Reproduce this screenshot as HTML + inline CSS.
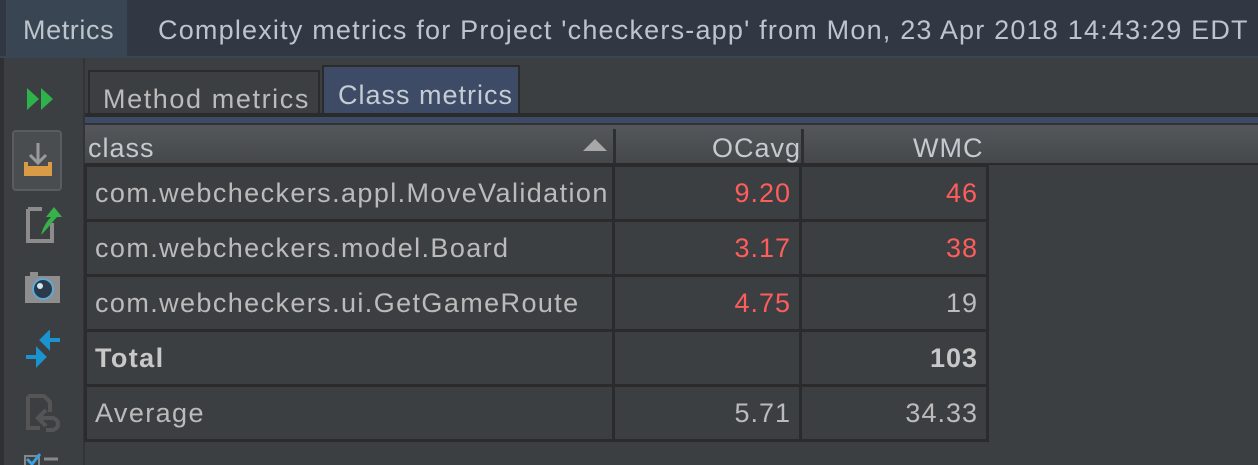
<!DOCTYPE html>
<html><head><meta charset="utf-8"><style>
*{margin:0;padding:0;box-sizing:border-box}
body{width:1258px;height:465px;overflow:hidden;background:#3c3f41;font-family:"Liberation Sans","DejaVu Sans",sans-serif;color:#bbbbbb;position:relative}
.top{position:absolute;left:0;top:0;width:1258px;height:58px;background:#313843;border-bottom:2px solid #3a4452}
.top .m{position:absolute;left:6px;top:0;width:121px;height:57px;background:#3a4554;color:#bcc4cd;font-size:27px;line-height:60px;padding-left:17px;letter-spacing:0.6px}
.top .t{position:absolute;left:158px;top:0;line-height:60px;font-size:27px;letter-spacing:1.2px;color:#bcc4cd;white-space:nowrap}
.lb{position:absolute;left:0;top:58px;width:4px;height:407px;background:#2e3033}
.side{position:absolute;left:83px;top:58px;width:2px;height:407px;background:#323436}
.tab{position:absolute;font-size:27px;white-space:nowrap;letter-spacing:1.6px}
.t1{left:88px;top:70px;width:232px;height:46px;background:#3c3f41;border:2px solid #2b2b2b;border-bottom:none;padding-left:13px;line-height:54px;color:#bbb}
.t2{left:322px;top:65px;width:198px;height:52px;background:#3d4b66;border:2px solid #2b2b2b;border-bottom:none;padding-left:14px;line-height:56px;color:#c6ccd4;letter-spacing:1px}
.line{position:absolute;left:85px;top:113px;width:1173px;height:4px;background:#2b2b2b}
.blue{position:absolute;left:85px;top:117px;width:1173px;height:6px;background:#3d4b66}
.hdr{position:absolute;left:85px;top:123px;width:1173px;height:42px;background:linear-gradient(#54575b,#45484b);border-top:2px solid #333;border-bottom:2px solid #2b2b2b}
.hdr span{position:absolute;top:0;font-size:27px;line-height:46px;color:#c4cad0;letter-spacing:1px}
.sep{position:absolute;top:4px;width:3px;height:34px;background:#2d2f31}
table{position:absolute;left:84px;top:164px;border-collapse:collapse;table-layout:fixed;width:902px}
td{height:55px;border:3px solid #2b2b2b;font-size:27px;padding:0 8px;color:#bbbbbb;white-space:nowrap;letter-spacing:1.4px;overflow:visible}
td.n{text-align:right;letter-spacing:1px}
.r{color:#ff5c5c}
b{color:#c8c8c8}
</style></head><body>
<div class="top"><div class="m">Metrics</div><div class="t">Complexity metrics for Project 'checkers-app' from Mon, 23 Apr 2018 14:43:29 EDT</div></div>
<div class="lb"></div>
<div class="side"></div>
<svg style="position:absolute;left:25px;top:86px" width="36" height="26"><polygon points="2,2 14,13 2,24" fill="#2db34a"/><polygon points="16,2 28,13 16,24" fill="#2db34a"/></svg>
<div style="position:absolute;left:12px;top:130px;width:50px;height:61px;background:#4a4d50;border:2px solid #5a5d60;border-radius:4px"></div>
<svg style="position:absolute;left:22px;top:140px" width="32" height="42"><path d="M16 3v20M8 15l8 8 8-8" stroke="#9a9a9a" stroke-width="3" fill="none"/><rect x="2" y="26" width="28" height="10" fill="#d99b45"/><rect x="2" y="22" width="4" height="6" fill="#d99b45"/><rect x="26" y="22" width="4" height="6" fill="#d99b45"/></svg>
<svg style="position:absolute;left:24px;top:203px" width="40" height="40"><path d="M4 6h14M4 6v32h24v-18" stroke="#8c8c8c" stroke-width="4" fill="none"/><path d="M17 32c2-8 6-14 10-18h-5l8-10 8 10h-5c-4 4-8 10-16 18z" fill="#37b24a"/></svg>
<svg style="position:absolute;left:24px;top:270px" width="38" height="34"><rect x="1" y="6" width="35" height="27" fill="#8e8e8e"/><rect x="6" y="2" width="8" height="5" fill="#8e8e8e"/><circle cx="19" cy="19" r="10" fill="#2a3a48" stroke="#5fa8d8" stroke-width="2"/><circle cx="16" cy="16" r="3" fill="#cfe6f5"/></svg>
<svg style="position:absolute;left:24px;top:330px" width="40" height="40"><path d="M36 10H24M24 4v12l-6-6z" fill="#1a93cf" stroke="#1a93cf" stroke-width="4"/><path d="M2 27h12M14 21v12l6-6z" fill="#1a93cf" stroke="#1a93cf" stroke-width="4"/></svg>
<svg style="position:absolute;left:24px;top:392px" width="40" height="40"><path d="M4 4h16l6 6v10M4 4v32h12" stroke="#555" stroke-width="4" fill="none"/><path d="M22 18l-8 8 8 8M14 26h14a6 6 0 0 1 0 12h-6" stroke="#555" stroke-width="4" fill="none"/></svg>
<svg style="position:absolute;left:24px;top:453px" width="40" height="12"><rect x="1" y="3" width="14" height="12" fill="none" stroke="#888" stroke-width="2"/><path d="M3 6l5 5 8-10" stroke="#3aa0e0" stroke-width="3" fill="none"/><path d="M20 6h14" stroke="#888" stroke-width="3"/></svg>

<div class="tab t1">Method metrics</div>
<div class="tab t2">Class metrics</div>
<div class="line"></div>
<div class="blue"></div>
<div class="hdr">
<span style="left:3px">class</span>
<svg style="position:absolute;left:498px;top:13px" width="24" height="14"><polygon points="0,13 12,1 24,13" fill="#a8a8a8"/></svg>
<div class="sep" style="left:528px"></div>
<span style="left:627px">OCavg</span>
<div class="sep" style="left:716px"></div>
<span style="left:828px">WMC</span>
</div>
<table>
<colgroup><col style="width:528px"><col style="width:187px"><col style="width:187px"></colgroup>
<tr><td>com.webcheckers.appl.MoveValidation</td><td class="n r">9.20</td><td class="n r">46</td></tr>
<tr><td>com.webcheckers.model.Board</td><td class="n r">3.17</td><td class="n r">38</td></tr>
<tr><td>com.webcheckers.ui.GetGameRoute</td><td class="n r">4.75</td><td class="n">19</td></tr>
<tr><td><b>Total</b></td><td class="n"></td><td class="n"><b>103</b></td></tr>
<tr><td>Average</td><td class="n">5.71</td><td class="n">34.33</td></tr>
</table>
</body></html>
